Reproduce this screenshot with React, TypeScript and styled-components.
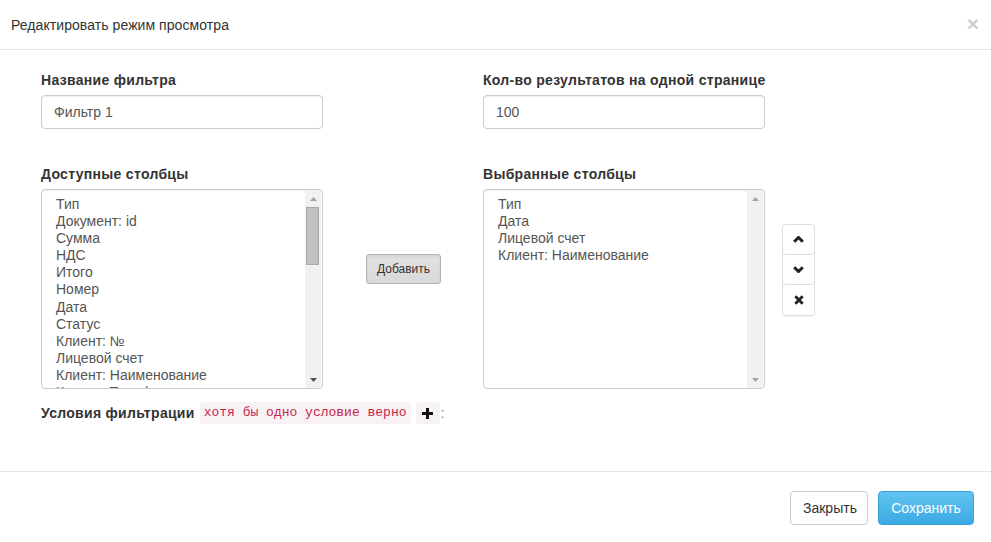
import React from 'react';
import styled, { createGlobalStyle } from 'styled-components';

const GlobalStyle = createGlobalStyle`
  html, body {
    margin: 0;
    padding: 0;
    background: #ffffff;
  }
  body {
    font-family: "Liberation Sans", Arial, sans-serif;
    font-size: 14px;
    line-height: 20px;
    color: #333333;
  }
  * {
    box-sizing: border-box;
  }
`;

const availableColumns = [
  'Тип', 'Документ: id', 'Сумма', 'НДС', 'Итого', 'Номер', 'Дата', 'Статус',
  'Клиент: №', 'Лицевой счет', 'Клиент: Наименование', 'Клиент: Телефон',
  'Клиент: Адрес', 'Клиент: Email', 'Комментарий'
];

const selectedColumns = ['Тип', 'Дата', 'Лицевой счет', 'Клиент: Наименование'];

const ModalContent = styled.div`
  width: 991px;
  height: 542px;
  display: flex;
  flex-direction: column;
  background: #ffffff;
`;

const Header = styled.div`
  height: 50px;
  padding: 15px 12px 14px 11px;
  border-bottom: 1px solid #e5e5e5;
  display: flex;
  align-items: center;
  justify-content: space-between;
`;

const Title = styled.h4`
  margin: 0;
  font-size: 14px;
  font-weight: normal;
  line-height: 20px;
  letter-spacing: 0.07px;
  color: #333333;
`;

const CloseButton = styled.button`
  border: 0;
  background: transparent;
  padding: 0;
  margin-top: -4px;
  font-family: "Liberation Sans", Arial, sans-serif;
  font-size: 21px;
  font-weight: bold;
  line-height: 1;
  color: #000000;
  opacity: 0.2;
  cursor: pointer;
`;

const Body = styled.div`
  flex: 1;
  padding: 20px 15px 0 41px;
`;

const FieldsGrid = styled.div`
  display: grid;
  grid-template-columns: 282px 160px 282px auto;
  row-gap: 35px;
  align-items: start;
`;

const FormGroup = styled.div<{ $col: number }>`
  grid-column: ${(props) => props.$col};
  display: flex;
  flex-direction: column;
`;

const Label = styled.label`
  font-weight: bold;
  font-size: 14px;
  line-height: 20px;
  letter-spacing: 0.3px;
  margin-bottom: 5px;
  color: #333333;
  white-space: nowrap;
`;

const TextInput = styled.input`
  height: 34px;
  width: 100%;
  padding: 6px 12px;
  font-family: "Liberation Sans", Arial, sans-serif;
  font-size: 14px;
  color: #555555;
  border: 1px solid #cccccc;
  border-radius: 4px;
  box-shadow: inset 0 1px 1px rgba(0, 0, 0, 0.075);
  outline: none;
`;

const ListBox = styled.div`
  height: 200px;
  border: 1px solid #cccccc;
  border-radius: 4px;
  box-shadow: inset 0 1px 1px rgba(0, 0, 0, 0.075);
  display: flex;
  overflow: hidden;
`;

const ListItems = styled.div`
  flex: 1;
  padding: 6px 0 0 14px;
  overflow: hidden;
`;

const ListItem = styled.div`
  font-size: 14px;
  line-height: 17.1px;
  height: 17.1px;
  color: #555555;
  white-space: nowrap;
`;

const ScrollBar = styled.div`
  width: 16px;
  margin-right: 1px;
  background: #f1f1f1;
  display: flex;
  flex-direction: column;
`;

const ScrollArrow = styled.div`
  height: 17px;
  display: flex;
  align-items: center;
  justify-content: center;
`;

const ScrollTrack = styled.div`
  flex: 1;
  padding: 0 2px 0 1px;
`;

const ScrollThumb = styled.div`
  height: 58px;
  background: #c1c1c1;
  border: 1px solid #a9a9a9;
`;

const MiddleCell = styled.div`
  grid-column: 2;
  display: flex;
  justify-content: center;
  padding: 90px 0 0 1px;
`;

const SmallButton = styled.button`
  height: 30px;
  padding: 5px 10px;
  font-family: "Liberation Sans", Arial, sans-serif;
  font-size: 12px;
  line-height: 18px;
  color: #333333;
  background: linear-gradient(#e2e2e2, #d9d9d9);
  border: 1px solid #b3b3b3;
  border-radius: 3px;
  box-shadow: inset 0 2px 3px rgba(0, 0, 0, 0.06);
`;

const SideCell = styled.div`
  grid-column: 4;
  padding: 60px 0 0 17px;
`;

const VerticalGroup = styled.div`
  width: 33px;
  display: flex;
  flex-direction: column;
  border: 1px solid #dddddd;
  border-radius: 4px;
  box-shadow: 0 1px 1px rgba(0, 0, 0, 0.05);
`;

const GroupButton = styled.button<{ $last?: boolean }>`
  height: 30px;
  border: 0;
  border-bottom: ${(props) => (props.$last ? '0' : '1px solid #dddddd')};
  background: #ffffff;
  display: flex;
  align-items: center;
  justify-content: center;
  padding: 0;
  border-radius: 4px;
`;

const Conditions = styled.div`
  margin-top: 13px;
  display: flex;
  align-items: center;
  height: 22px;
`;

const ConditionsLabel = styled.span`
  font-weight: bold;
  letter-spacing: 0.3px;
  margin-right: 5px;
`;

const Code = styled.code`
  font-family: "Liberation Mono", "Courier New", monospace;
  font-size: 13px;
  line-height: 18px;
  padding: 2px 4px;
  color: #c7254e;
  background: #f9f2f4;
  border-radius: 4px;
  margin-right: 5px;
`;

const PlusButton = styled.span`
  width: 24px;
  height: 22px;
  background: #f7f2f4;
  border-radius: 4px;
  display: flex;
  align-items: center;
  justify-content: center;
`;

const Colon = styled.span`
  color: #777777;
  margin-left: 1px;
`;

const Footer = styled.div`
  height: 71px;
  border-top: 1px solid #e5e5e5;
  padding: 19px 17px 0 0;
  display: flex;
  justify-content: flex-end;
  gap: 10px;
`;

const FooterButton = styled.button<{ $primary?: boolean }>`
  height: 34px;
  padding: 6px 12px;
  font-family: "Liberation Sans", Arial, sans-serif;
  font-size: 14px;
  line-height: 20px;
  border-radius: 4px;
  color: ${(props) => (props.$primary ? '#ffffff' : '#333333')};
  background: ${(props) => (props.$primary ? 'linear-gradient(#62c3f0, #3aa9e4)' : '#ffffff')};
  border: 1px solid ${(props) => (props.$primary ? '#3a9fd8' : '#cccccc')};
  width: ${(props) => (props.$primary ? '96px' : '78px')};
`;

const ArrowUp = ({ color }: { color: string }) => (
  <svg width="7" height="4" viewBox="0 0 7 4">
    <path d="M3.5 0 L7 4 L0 4 Z" fill={color} />
  </svg>
);

const ArrowDown = ({ color }: { color: string }) => (
  <svg width="7" height="4" viewBox="0 0 7 4">
    <path d="M0 0 L7 0 L3.5 4 Z" fill={color} />
  </svg>
);

const ChevronIcon = ({ down }: { down?: boolean }) => (
  <svg width="11" height="7" viewBox="0 0 11 7">
    <path
      d={down ? 'M1.2 1.2 L5.5 5.5 L9.8 1.2' : 'M1.2 5.8 L5.5 1.5 L9.8 5.8'}
      fill="none"
      stroke="#222"
      strokeWidth="3"
    />
  </svg>
);

const RemoveIcon = () => (
  <svg width="10" height="10" viewBox="0 0 10 10">
    <path d="M1.3 1.3 L8.7 8.7 M8.7 1.3 L1.3 8.7" stroke="#222" strokeWidth="2.8" />
  </svg>
);

const PlusIcon = () => (
  <svg width="11" height="11" viewBox="0 0 11 11">
    <path d="M5.5 0 V11 M0 5.5 H11" stroke="#111" strokeWidth="3" />
  </svg>
);

const Listbox = ({ items, thumb }: { items: string[], thumb: boolean }) => (
  <ListBox>
    <ListItems>
      {items.map((item, i) => (
        <ListItem key={i}>{item}</ListItem>
      ))}
    </ListItems>
    <ScrollBar>
      <ScrollArrow><ArrowUp color="#a3a3a3" /></ScrollArrow>
      <ScrollTrack>{thumb ? <ScrollThumb /> : null}</ScrollTrack>
      <ScrollArrow><ArrowDown color={thumb ? '#505050' : '#a3a3a3'} /></ScrollArrow>
    </ScrollBar>
  </ListBox>
);

export default function App() {
  return (
    <ModalContent>
      <GlobalStyle />
      <Header>
        <Title>Редактировать режим просмотра</Title>
        <CloseButton>×</CloseButton>
      </Header>
      <Body>
        <FieldsGrid>
          <FormGroup $col={1}>
            <Label>Название фильтра</Label>
            <TextInput defaultValue="Фильтр 1" />
          </FormGroup>
          <FormGroup $col={3}>
            <Label>Кол-во результатов на одной странице</Label>
            <TextInput defaultValue="100" />
          </FormGroup>
          <FormGroup $col={1}>
            <Label>Доступные столбцы</Label>
            <Listbox items={availableColumns} thumb />
          </FormGroup>
          <MiddleCell>
            <SmallButton>Добавить</SmallButton>
          </MiddleCell>
          <FormGroup $col={3}>
            <Label>Выбранные столбцы</Label>
            <Listbox items={selectedColumns} thumb={false} />
          </FormGroup>
          <SideCell>
            <VerticalGroup>
              <GroupButton><ChevronIcon /></GroupButton>
              <GroupButton><ChevronIcon down /></GroupButton>
              <GroupButton $last><RemoveIcon /></GroupButton>
            </VerticalGroup>
          </SideCell>
        </FieldsGrid>
        <Conditions>
          <ConditionsLabel>Условия фильтрации</ConditionsLabel>
          <Code>хотя бы одно условие верно</Code>
          <PlusButton><PlusIcon /></PlusButton>
          <Colon>:</Colon>
        </Conditions>
      </Body>
      <Footer>
        <FooterButton>Закрыть</FooterButton>
        <FooterButton $primary>Сохранить</FooterButton>
      </Footer>
    </ModalContent>
  );
}
